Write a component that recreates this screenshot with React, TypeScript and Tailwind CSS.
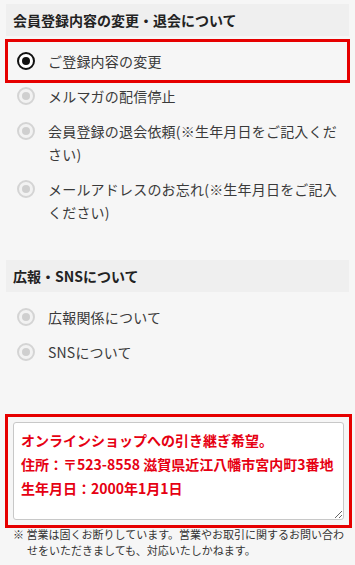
import React from 'react';

type Item = { lines: string[]; checked?: boolean; marked?: boolean };

const sections: { title: string; items: Item[] }[] = [
  {
    title: '会員登録内容の変更・退会について',
    items: [
      { lines: ['ご登録内容の変更'], checked: true, marked: true },
      { lines: ['メルマガの配信停止'] },
      { lines: ['会員登録の退会依頼(※生年月日をご記入くだ', 'さい)'] },
      { lines: ['メールアドレスのお忘れ(※生年月日をご記入', 'ください)'] },
    ],
  },
  {
    title: '広報・SNSについて',
    items: [{ lines: ['広報関係について'] }, { lines: ['SNSについて'] }],
  },
];

const Radio: React.FC<{ checked?: boolean }> = ({ checked }) =>
  checked ? (
    <span className="flex h-[18px] w-[18px] shrink-0 items-center justify-center rounded-full border-2 border-[#111] bg-white">
      <span className="h-[8px] w-[8px] rounded-full bg-[#111]" />
    </span>
  ) : (
    <span className="flex h-[18px] w-[18px] shrink-0 items-center justify-center rounded-full border-2 border-[#d4d4d4] bg-[#f2f2f2]">
      <span className="h-[8px] w-[8px] rounded-full bg-[#cfcfcf]" />
    </span>
  );

const App: React.FC = () => {
  const memo = 'オンラインショップへの引き継ぎ希望。\n住所：〒523-8558 滋賀県近江八幡市宮内町3番地\n生年月日：2000年1月1日';

  return (
    <div
      className="min-h-screen w-[355px] bg-[#f6f6f6] px-[6px] pt-[4px] text-[#333]"
      style={{ fontFamily: '"Noto Sans CJK JP", "Noto Sans", sans-serif' }}
    >
      {sections.map((section, si) => (
        <div key={section.title} className={si > 0 ? 'mt-[30.5px]' : ''}>
          <div className="flex h-[32px] items-center bg-[#efefef] px-[7px] text-[14px] font-bold text-[#222]">
            {section.title}
          </div>
          <ul className="pt-[7.5px]">
            {section.items.map((item) => (
              <li key={item.lines[0]} className="relative flex items-start py-[6px]">
                <span className="ml-[11px] flex h-[23px] items-center">
                  <Radio checked={item.checked} />
                </span>
                <span className="ml-[13px] text-[14px] leading-[23px] tracking-[0.2px] text-[#3a3a3a]">
                  {item.lines.map((line, i) => (
                    <span key={i} className="block whitespace-nowrap">
                      {line}
                    </span>
                  ))}
                </span>
                {item.marked && (
                  <span className="pointer-events-none absolute -inset-x-[1px] -inset-y-[4.5px] border-[3px] border-[#e60000]" />
                )}
              </li>
            ))}
          </ul>
        </div>
      ))}

      {/* お問い合わせ内容 */}
      <div className="mt-[52.5px] ml-[7px] w-[331px] outline-[3px] outline-offset-[5px] outline-[#e60000]">
        <textarea
          readOnly
          defaultValue={memo}
          className="block h-[98px] w-full rounded-[3px] border border-[#c8c8c8] bg-white pt-[5px] pl-[7px] pr-[2px] text-[14px] leading-[24px] font-bold text-[#e60012]"
          style={{ fontFamily: '"Noto Sans CJK JP", "Noto Sans", sans-serif' }}
        />
      </div>

      <p className="mt-[6px] pl-[21px] -indent-[14px] text-[11px] leading-[16px] text-[#333]">
        ※ 営業は固くお断りしています。営業やお取引に関するお問い合わせをいただきましても、対応いたしかねます。
      </p>
    </div>
  );
};

export default App;
